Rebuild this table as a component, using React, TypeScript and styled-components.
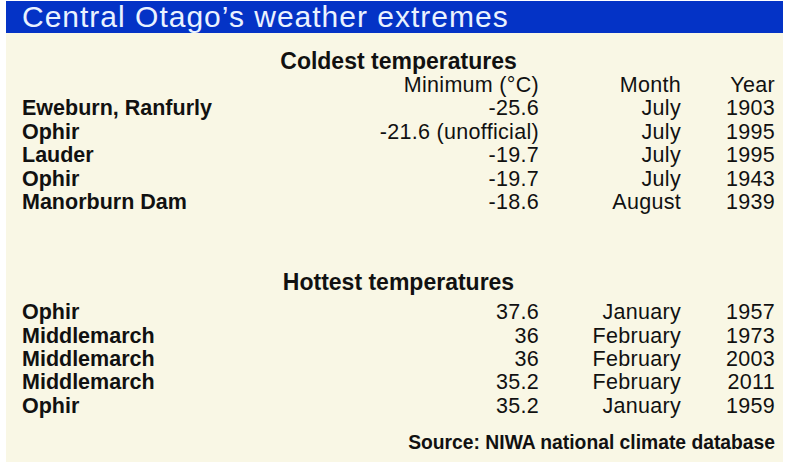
import * as React from 'react';
import styled, {createGlobalStyle} from 'styled-components';

const GlobalStyle = createGlobalStyle`
    html, body {
        margin: 0;
        padding: 0;
        background: #ffffff;
    }
    body {
        font-family: "Liberation Sans", Arial, sans-serif;
        color: #111111;
    }
`;

const Panel = styled.div`
    margin: 1px 0 0 6px;
    width: 777px;
    height: 461px;
    background: #f9f7e5;
    display: flex;
    flex-direction: column;
`;

const TitleBar = styled.div`
    height: 32px;
    background: #0433c6;
    color: #eaf2ff;
    font-size: 30px;
    line-height: 32px;
    letter-spacing: 1px;
    padding-left: 16px;
    white-space: nowrap;
    overflow: hidden;
`;

const Body = styled.div`
    padding: 16px 8px 0 16px;
    display: flex;
    flex-direction: column;
`;

const SectionHeading = styled.div<{ $gap: number }>`
    font-weight: bold;
    font-size: 23px;
    line-height: 24px;
    text-align: center;
    margin-bottom: ${p => p.$gap}px;
`;

const Table = styled.div<{ $pitch: number }>`
    display: grid;
    grid-template-columns: 1fr 200px 142px 94px;
    grid-auto-rows: ${p => p.$pitch}px;
    font-size: 21.5px;
    line-height: ${p => p.$pitch}px;
    white-space: nowrap;
`;

const NameCell = styled.div`
    font-weight: bold;
`;

const ValueCell = styled.div`
    text-align: right;
    letter-spacing: 0.3px;
`;

const Spacer = styled.div<{ $h: number }>`
    height: ${p => p.$h}px;
`;

const Source = styled.div`
    margin-top: 13px;
    font-weight: bold;
    font-size: 19.3px;
    line-height: 24px;
    text-align: right;
`;

type Row = [string, string, string, string];

const coldest: Row[] = [
    ['Eweburn, Ranfurly', '-25.6', 'July', '1903'],
    ['Ophir', '-21.6 (unofficial)', 'July', '1995'],
    ['Lauder', '-19.7', 'July', '1995'],
    ['Ophir', '-19.7', 'July', '1943'],
    ['Manorburn Dam', '-18.6', 'August', '1939'],
];

const hottest: Row[] = [
    ['Ophir', '37.6', 'January', '1957'],
    ['Middlemarch', '36', 'February', '1973'],
    ['Middlemarch', '36', 'February', '2003'],
    ['Middlemarch', '35.2', 'February', '2011'],
    ['Ophir', '35.2', 'January', '1959'],
];

const Rows: React.FC<{ rows: Row[] }> = ({rows}) => (
    <>
        {rows.map((r, i) => (
            <React.Fragment key={i}>
                <NameCell>{r[0]}</NameCell>
                <ValueCell>{r[1]}</ValueCell>
                <ValueCell>{r[2]}</ValueCell>
                <ValueCell>{r[3]}</ValueCell>
            </React.Fragment>
        ))}
    </>
);

const App: React.FC = () => {
    return (
        <>
            <GlobalStyle/>
            <Panel>
                <TitleBar>Central Otago’s weather extremes</TitleBar>
                <Body>
                    <SectionHeading $gap={1}>Coldest temperatures</SectionHeading>
                    <Table $pitch={23.4}>
                        <div/>
                        <ValueCell>Minimum (°C)</ValueCell>
                        <ValueCell>Month</ValueCell>
                        <ValueCell>Year</ValueCell>
                        <Rows rows={coldest}/>
                    </Table>
                    <Spacer $h={56}/>
                    <SectionHeading $gap={7}>Hottest temperatures</SectionHeading>
                    <Table $pitch={23.3}>
                        <Rows rows={hottest}/>
                    </Table>
                    <Source>Source: NIWA national climate database</Source>
                </Body>
            </Panel>
        </>
    );
};

export default App;
